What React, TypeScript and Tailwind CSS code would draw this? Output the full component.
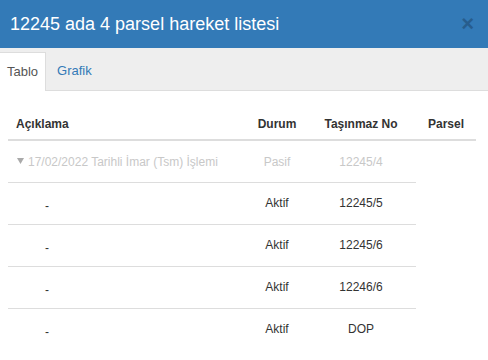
import React from "react";

const rows = [
  { durum: "Aktif", no: "12245/5" },
  { durum: "Aktif", no: "12245/6" },
  { durum: "Aktif", no: "12246/6" },
  { durum: "Aktif", no: "DOP" },
];

export default function App() {
  return (
    <div
      className="w-[488px] h-[360px] overflow-hidden bg-white text-[#333]"
      style={{ fontFamily: '"Liberation Sans", Arial, sans-serif' }}
    >
      <div className="h-[48px] bg-[#337ab7] flex items-center justify-between pl-[10px] pr-[12px]">
        <div className="text-white text-[18px] leading-none">12245 ada 4 parsel hareket listesi</div>
        <div className="text-[#23527c] text-[22px] font-bold leading-none opacity-70 pr-[2px]">×</div>
      </div>
      <div className="h-[43px] bg-[#eeeeee] border-b border-[#dddddd] flex items-end pt-[4px]">
        <div className="h-[39px] px-[7px] bg-white border-t border-r border-[#dddddd] -mb-px flex items-center text-[13px] text-[#555]">
          Tablo
        </div>
        <div className="h-[39px] px-[11px] flex items-center text-[13px] text-[#337ab7]">Grafik</div>
      </div>
      <div className="px-[8px] pt-[16px] text-[12px]">
        <div className="grid grid-cols-[240px_58px_110px_60px] w-[468px] border-b-2 border-[#dddddd] h-[34px] items-start font-bold text-[#333]">
          <div className="pl-[8px] pt-[8px]">Açıklama</div>
          <div className="text-center pt-[8px]">Durum</div>
          <div className="text-center pt-[8px]">Taşınmaz No</div>
          <div className="text-center pt-[8px]">Parsel</div>
        </div>
        <div className="w-[408px]">
          <div className="grid grid-cols-[240px_58px_110px] h-[42px] border-b border-[#dddddd] items-center text-[#c8c8c8]">
            <div className="pl-[9px] flex items-center gap-[4px]">
              <svg width="7" height="8" viewBox="0 0 7 8" className="mt-[-1px]">
                <path d="M0 1 L7 1 L3.5 7 Z" fill="#aaa" />
              </svg>
              <span>17/02/2022 Tarihli İmar (Tsm) İşlemi</span>
            </div>
            <div className="text-center">Pasif</div>
            <div className="text-center">12245/4</div>
          </div>
          {rows.map((r, i) => (
            <div
              key={i}
              className={`grid grid-cols-[240px_58px_110px] h-[42px] ${i < rows.length - 1 ? "border-b border-[#dddddd]" : ""}`}
            >
              <div className="pl-[37px] pt-[14px] text-[#333]">-</div>
              <div className="text-center pt-[11px]">Aktif</div>
              <div className="text-center pt-[11px] text-[#333]">{r.no}</div>
            </div>
          ))}
        </div>
      </div>
    </div>
  );
}
